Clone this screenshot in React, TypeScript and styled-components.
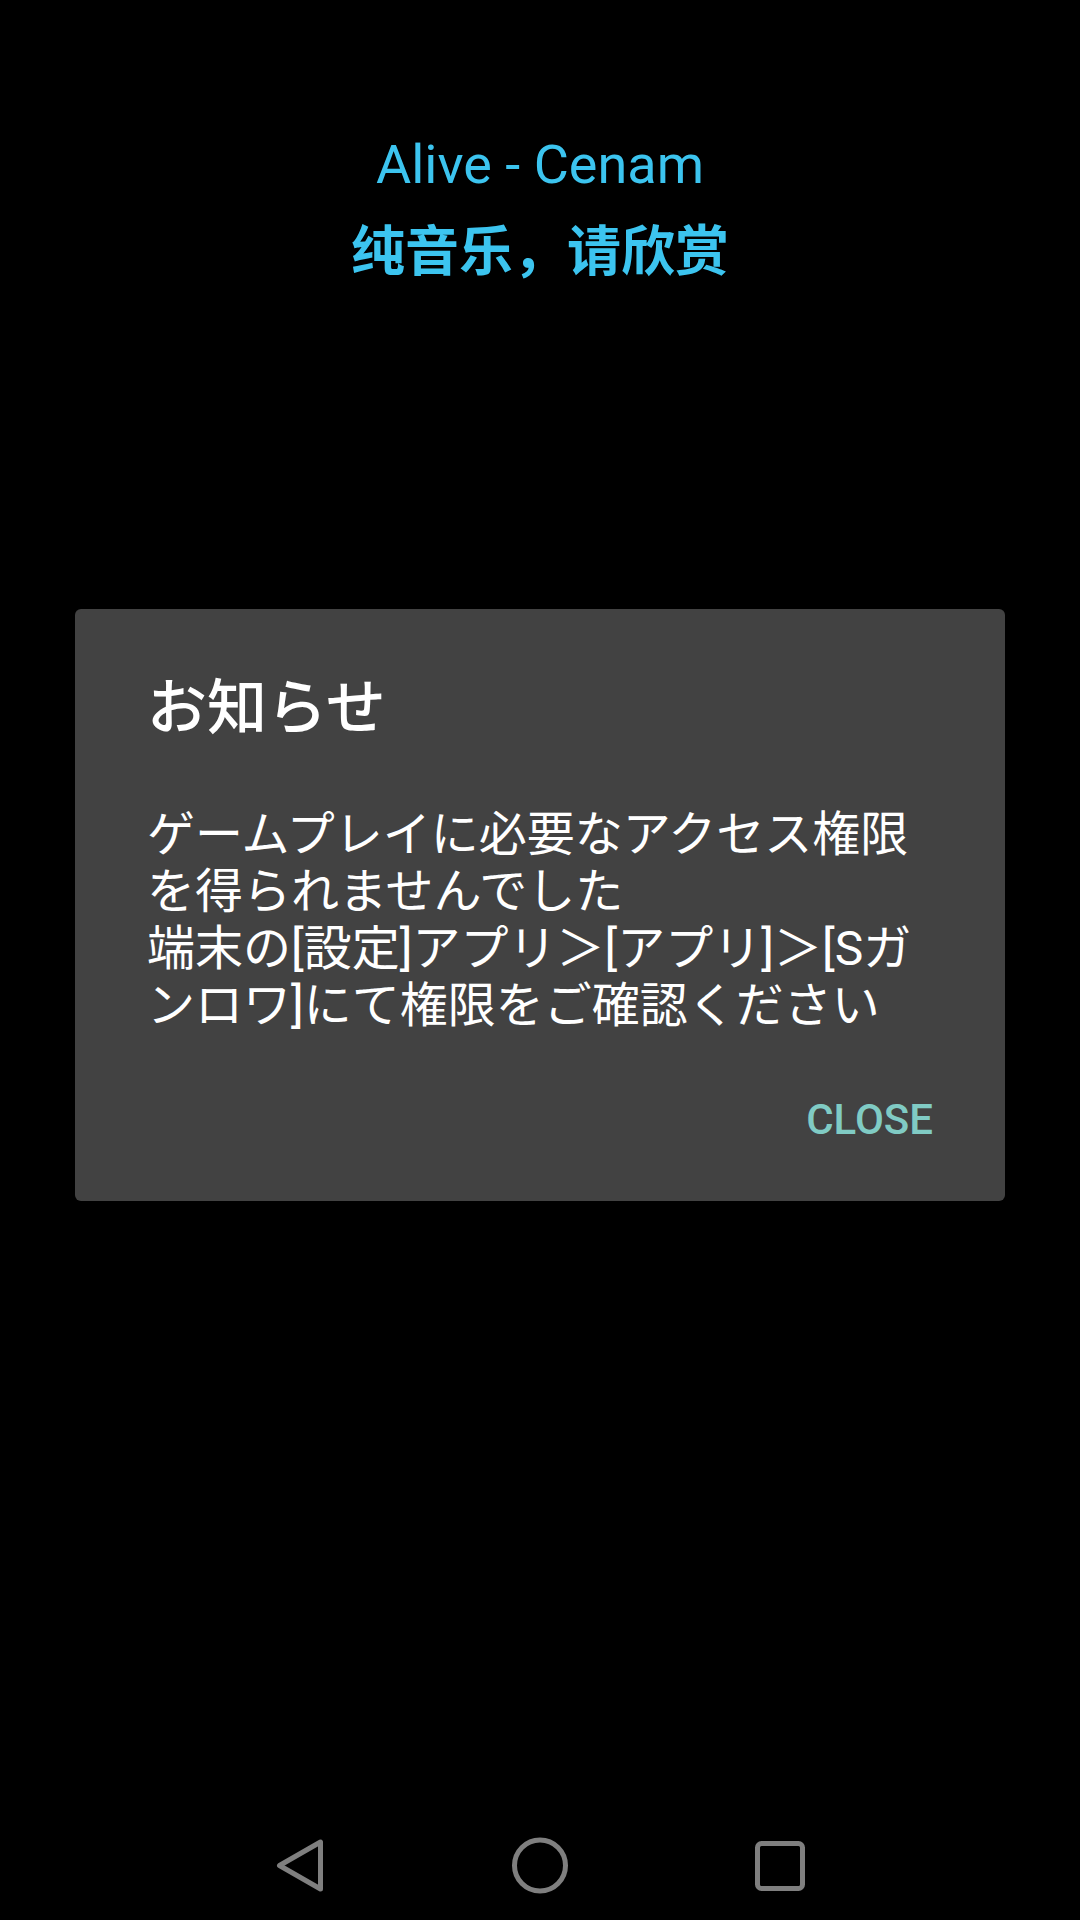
import styled, { createGlobalStyle } from "styled-components";

const GlobalStyle = createGlobalStyle`
  html, body {
    margin: 0;
    padding: 0;
    background: #000;
  }
  * {
    box-sizing: border-box;
  }
`;

const bodyLines = [
  "ゲームプレイに必要なアクセス権限",
  "を得られませんでした",
  "端末の[設定]アプリ＞[アプリ]＞[Sガ",
  "ンロワ]にて権限をご確認ください",
];

export default function App() {
  return (
    <>
      <GlobalStyle />
      <Screen>
        <Content>
          <SongTitle>Alive - Cenam</SongTitle>
          <SongNote>纯音乐，请欣赏</SongNote>

          <Scrim>
            <Dialog role="dialog">
              <DialogTitle>お知らせ</DialogTitle>
              <DialogBody>
                {bodyLines.map((line) => (
                  <BodyLine key={line}>{line}</BodyLine>
                ))}
              </DialogBody>
              <DialogActions>
                <TextButton>CLOSE</TextButton>
              </DialogActions>
            </Dialog>
          </Scrim>
        </Content>

        <NavBar>
          <NavButton aria-label="back">
            <svg width="60" height="60" viewBox="0 0 60 60">
              <path
                d="M9.5 30.5 L50.5 7 L50.5 54 Z"
                fill="none"
                stroke="#7f7f7f"
                strokeWidth="5"
                strokeLinejoin="round"
              />
            </svg>
          </NavButton>
          <NavButton aria-label="home">
            <svg width="60" height="60" viewBox="0 0 60 60">
              <circle cx="30" cy="30.5" r="25.5" fill="none" stroke="#7f7f7f" strokeWidth="5" />
            </svg>
          </NavButton>
          <NavButton aria-label="recents">
            <svg width="60" height="60" viewBox="0 0 60 60">
              <rect
                x="7.5"
                y="8.5"
                width="45"
                height="45"
                rx="4"
                fill="none"
                stroke="#7f7f7f"
                strokeWidth="5"
              />
            </svg>
          </NavButton>
        </NavBar>
      </Screen>
    </>
  );
}

const Screen = styled.div`
  width: 1080px;
  height: 1920px;
  background: #000;
  display: flex;
  flex-direction: column;
  overflow: hidden;
`;

const Content = styled.main`
  position: relative;
  flex: 1;
  display: flex;
  flex-direction: column;
  align-items: center;
  padding-top: 133px;
`;

const SongTitle = styled.div`
  font-family: Roboto, "Noto Sans CJK SC", sans-serif;
  font-size: 54px;
  line-height: 63px;
  color: #3cc4ef;
`;

const SongNote = styled.div`
  margin-top: 25px;
  font-family: Roboto, "Noto Sans CJK SC", sans-serif;
  font-size: 54px;
  font-weight: 700;
  line-height: 63px;
  color: #3cc4ef;
`;

const Scrim = styled.div`
  position: absolute;
  inset: 0;
  display: flex;
  align-items: center;
  justify-content: center;
`;

const Dialog = styled.section`
  width: 930px;
  background: #424242;
  border-radius: 6px;
  padding: 65px 72px 57px;
  display: flex;
  flex-direction: column;
  font-family: Roboto, "Noto Sans CJK JP", sans-serif;
  color: #fff;
`;

const DialogTitle = styled.h2`
  margin: 0;
  font-size: 60px;
  font-weight: 500;
  line-height: 70px;
`;

const DialogBody = styled.div`
  margin-top: 62px;
  font-size: 48px;
  line-height: 57px;
  white-space: nowrap;
`;

const BodyLine = styled.div``;

const DialogActions = styled.div`
  margin-top: 62px;
  display: flex;
  justify-content: flex-end;
`;

const TextButton = styled.button`
  border: none;
  background: none;
  padding: 0;
  font-family: Roboto, sans-serif;
  font-size: 42px;
  font-weight: 500;
  line-height: 48px;
  color: #80cbc4;
  cursor: pointer;
`;

const NavBar = styled.nav`
  height: 110px;
  display: flex;
  justify-content: center;
  align-items: center;
`;

const NavButton = styled.div`
  width: 240px;
  height: 110px;
  display: flex;
  align-items: center;
  justify-content: center;
`;
